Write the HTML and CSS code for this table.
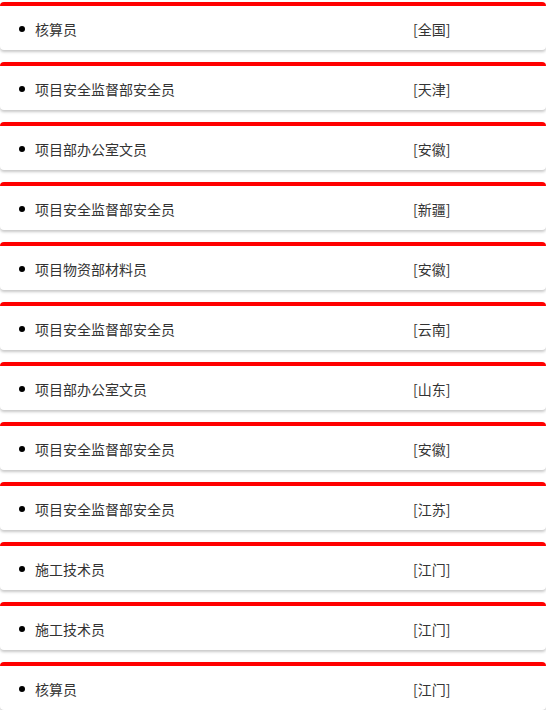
FILE: index.html
```html
<!DOCTYPE html>
<html lang="zh">
<head>
<meta charset="utf-8">
<link rel="stylesheet" href="styles.css">
</head>
<body>
<ul class="list">
  <li class="card"><span class="name">核算员</span><span class="region">[全国]</span></li>
  <li class="card"><span class="name">项目安全监督部安全员</span><span class="region">[天津]</span></li>
  <li class="card"><span class="name">项目部办公室文员</span><span class="region">[安徽]</span></li>
  <li class="card"><span class="name">项目安全监督部安全员</span><span class="region">[新疆]</span></li>
  <li class="card"><span class="name">项目物资部材料员</span><span class="region">[安徽]</span></li>
  <li class="card"><span class="name">项目安全监督部安全员</span><span class="region">[云南]</span></li>
  <li class="card"><span class="name">项目部办公室文员</span><span class="region">[山东]</span></li>
  <li class="card"><span class="name">项目安全监督部安全员</span><span class="region">[安徽]</span></li>
  <li class="card"><span class="name">项目安全监督部安全员</span><span class="region">[江苏]</span></li>
  <li class="card"><span class="name">施工技术员</span><span class="region">[江门]</span></li>
  <li class="card"><span class="name">施工技术员</span><span class="region">[江门]</span></li>
  <li class="card"><span class="name">核算员</span><span class="region">[江门]</span></li>
</ul>
</body>
</html>
```
FILE: styles.css
```css
html, body {
  margin: 0;
  padding: 0;
  background: #fff;
}
body {
  font-family: "Noto Sans CJK SC", "Noto Sans", sans-serif;
  font-size: 14px;
  color: #333;
}
.list {
  list-style: none;
  margin: 0;
  padding: 2px 0 0;
  display: flex;
  flex-direction: column;
  gap: 12px;
}
.card {
  display: flex;
  align-items: center;
  height: 42px;
  padding-top: 2px;
  box-sizing: content-box;
  border-top: 4px solid #ff0000;
  border-radius: 4px;
  box-shadow: 0 2px 3px rgba(0, 0, 0, 0.22);
  background: #fff;
}
.name {
  position: relative;
  width: 378px;
  padding-left: 35px;
  box-sizing: content-box;
}
.name::before {
  content: "";
  position: absolute;
  left: 19px;
  top: 50%;
  width: 6px;
  height: 6px;
  margin-top: -3px;
  border-radius: 50%;
  background: #000;
}
.region {
  white-space: nowrap;
}
```
